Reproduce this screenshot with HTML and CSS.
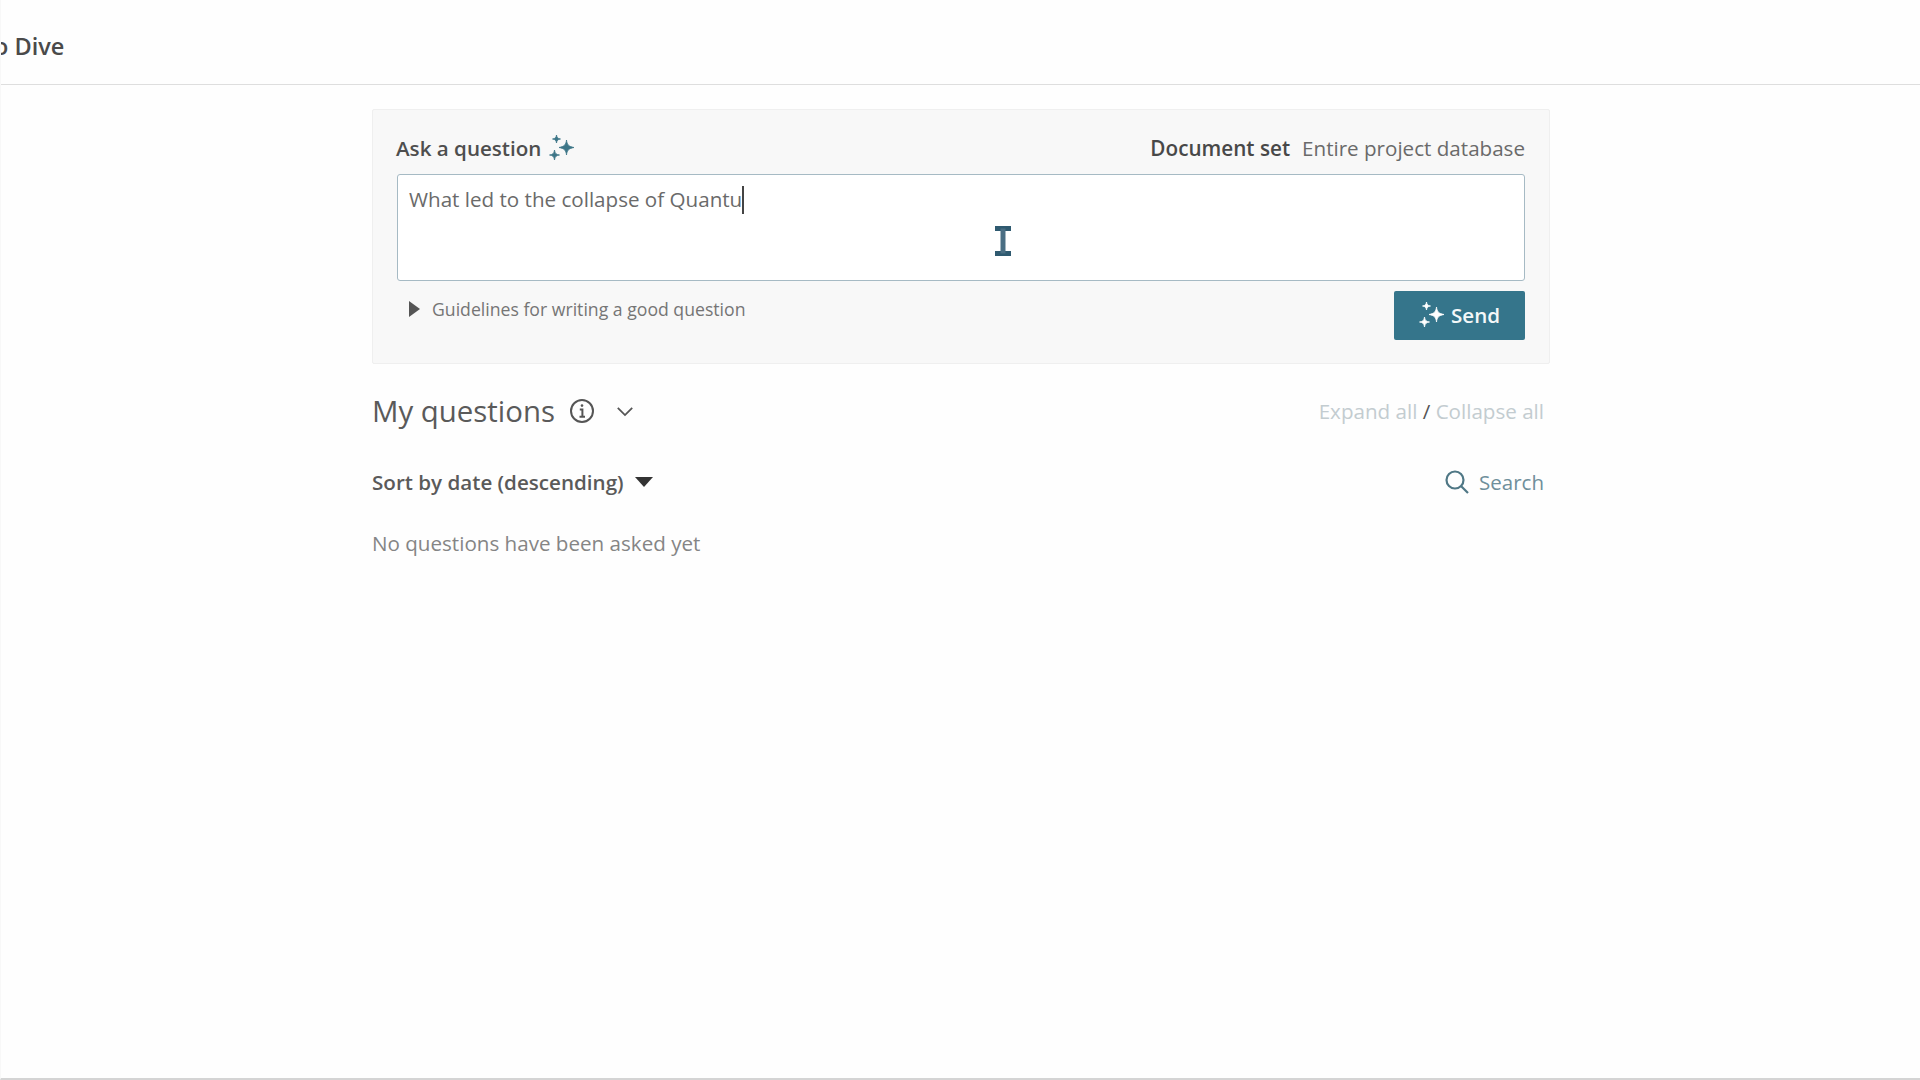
FILE: index.html
```html
<!DOCTYPE html>
<html lang="en">
<head>
<meta charset="utf-8">
<title>Dive</title>
<link rel="stylesheet" href="styles.css">
</head>
<body>
<div class="page">
  <header class="topbar"><span class="title">o Dive</span></header>
  <main class="content">
    <section class="ask">
      <div class="ask-head">
        <div class="ask-label">Ask a question
          <svg class="spark" viewBox="0 0 26 26"><path d="M17.500 5C18 9.800 19.800 11.500 25 12.500C19.800 13.500 18 15.200 17.500 20C17 15.200 15.200 13.500 10 12.500C15.200 11.500 17 9.800 17.500 5Z"/><path d="M7.500 0C8 2.800 8.700 3.500 11.500 4C8.700 4.500 8 5.200 7.500 8C7 5.200 6.300 4.500 3.500 4C6.300 3.500 7 2.800 7.500 0Z"/><path d="M5.500 15C6 18.500 7 19.500 10.500 20C7 20.500 6 21.500 5.500 25C5 21.500 4 20.500 0.500 20C4 19.500 5 18.500 5.500 15Z"/></svg>
        </div>
        <div class="docset"><b>Document set</b><span>Entire project database</span></div>
      </div>
      <div class="input"><span class="typed">What led to the collapse of Quantu</span><i class="caret"></i></div>
      <div class="ask-foot">
        <div class="guide"><i class="tri-right"></i><span>Guidelines for writing a good question</span></div>
        <button class="send">
          <svg class="spark white" viewBox="0 0 26 26"><path d="M17.500 5C18 9.800 19.800 11.500 25 12.500C19.800 13.500 18 15.200 17.500 20C17 15.200 15.200 13.500 10 12.500C15.200 11.500 17 9.800 17.500 5Z"/><path d="M7.500 0C8 2.800 8.700 3.500 11.500 4C8.700 4.500 8 5.200 7.500 8C7 5.200 6.300 4.500 3.500 4C6.300 3.500 7 2.800 7.500 0Z"/><path d="M5.500 15C6 18.500 7 19.500 10.500 20C7 20.500 6 21.500 5.500 25C5 21.500 4 20.500 0.500 20C4 19.500 5 18.500 5.500 15Z"/></svg>
          <span>Send</span>
        </button>
      </div>
    </section>
    <section class="questions">
      <div class="row q-head">
        <div class="q-title">
          <h2>My questions</h2>
          <svg class="info" viewBox="0 0 26 26"><circle cx="13" cy="13" r="11" /><path d="M10.800 11.500H13.400V18.500M10.500 18.800H16"/><circle class="dot" cx="13" cy="7.600" r="1.300"/></svg>
          <svg class="chev" viewBox="0 0 20 12"><path d="M2 2L10 10L18 2"/></svg>
        </div>
        <div class="toggle"><span>Expand all</span> <b>/</b> <span>Collapse all</span></div>
      </div>
      <div class="row sort-row">
        <div class="sort">Sort by date (descending)<i class="tri-down"></i></div>
        <div class="search">
          <svg viewBox="0 0 26 26"><circle cx="11" cy="11" r="8.500"/><path d="M17.200 17.200L24 24"/></svg>
          <span>Search</span>
        </div>
      </div>
      <p class="empty">No questions have been asked yet</p>
    </section>
  </main>
  <svg class="ibeam" viewBox="0 0 20 30"><path class="ibeam-caps" d="M2 2.500H18M2 27.500H18"/><path class="ibeam-stem" d="M10 2.500V27.500"/></svg>
</div>
</body>
</html>
```
FILE: styles.css
```css
* { box-sizing: border-box; }
html, body { margin: 0; height: 100%; }
body {
  font-family: "Open Sans", "Noto Sans", sans-serif;
  background: #fefefe;
  color: #555;
  overflow: hidden;
}
.page {
  position: relative;
  height: 1080px;
  display: flex;
  flex-direction: column;
  border-bottom: 2px solid #d4d4d4;
  border-left: 1px solid #f8f8f8;
}
.topbar {
  height: 85px;
  flex: none;
  display: flex;
  align-items: center;
  border-bottom: 1px solid #dedede;
  overflow: hidden;
  padding-top: 7px;
}
.title {
  margin-left: -7px;
  font-size: 23.500px;
  font-weight: 600;
  color: #4a4a4a;
}
.content {
  width: 1178px;
  margin: 24px 0 0 371px;
}
.ask {
  height: 255px;
  padding: 23px 24px 0 24px;
  background: #f8f8f8;
  border: 1px solid #efefef;
  border-radius: 2px;
}
.ask-head {
  height: 30px;
  margin-left: -1px;
  display: flex;
  justify-content: space-between;
  align-items: center;
  font-size: 20.600px;
}
.ask-label {
  display: flex;
  align-items: center;
  gap: 8px;
  font-weight: 600;
  color: #4e4e4e;
}
.spark { width: 26px; height: 26px; fill: #3d7688; stroke: #3d7688; stroke-width: 0.800; }
.spark.white { fill: #fff; stroke: #fff; }
.docset { display: flex; gap: 12px; color: #6a6a6a; }
.docset b { font-size: 20.700px; font-weight: 600; color: #484848; }
.input {
  height: 107px;
  margin-top: 11px;
  padding: 9px 11px;
  display: flex;
  align-items: flex-start;
  background: #fff;
  border: 1px solid #a6bac4;
  border-radius: 3px;
  font-size: 20.600px;
  line-height: 30px;
  color: #6a6a6a;
}
.caret { width: 2px; height: 28px; margin-top: 2px; background: #444; }
.ask-foot {
  display: flex;
  justify-content: space-between;
  align-items: flex-start;
  margin-top: 10px;
}
.guide {
  display: flex;
  align-items: center;
  gap: 12px;
  height: 32px;
  margin-top: 2px;
  padding-left: 12px;
  font-size: 17.650px;
  color: #757575;
}
.tri-right {
  width: 0;
  height: 0;
  border-left: 11px solid #555;
  border-top: 8px solid transparent;
  border-bottom: 8px solid transparent;
}
.send {
  width: 131px;
  height: 49px;
  display: flex;
  align-items: center;
  justify-content: center;
  gap: 6px;
  padding: 0 0 2px;
  border: 0;
  border-radius: 2px;
  background: #35758b;
  color: #f4f8f9;
  font: 600 20.600px "Open Sans", sans-serif;
}
.questions { padding-right: 6px; }
.row { display: flex; justify-content: space-between; align-items: center; }
.q-head { height: 40px; margin-top: 27px; }
.q-title { display: flex; align-items: center; }
h2 { margin: 0; font-size: 29.400px; font-weight: 400; color: #5a5a5a; }
.info { width: 26px; height: 26px; margin-left: 14px; fill: none; stroke: #555; stroke-width: 2; }
.info .dot { fill: #555; stroke: none; }
.chev { width: 18px; height: 11px; margin-left: 21px; fill: none; stroke: #555; stroke-width: 2; }
.toggle { font-size: 20.600px; color: #c3ccd0; }
.toggle b { font-weight: 400; color: #555; }
.sort-row { height: 30px; margin-top: 36px; }
.sort { display: flex; align-items: center; gap: 11px; font-size: 20.600px; font-weight: 600; color: #5a5a5a; }
.tri-down {
  width: 0;
  height: 0;
  border-top: 10px solid #333;
  border-left: 9px solid transparent;
  border-right: 9px solid transparent;
}
.search { display: flex; align-items: center; gap: 9px; font-size: 20.500px; color: #6f8f9b; }
.search svg { width: 26px; height: 26px; fill: none; stroke: #4f7785; stroke-width: 2.200; }
.empty { margin: 31px 0 0; font-size: 20.600px; line-height: 30px; color: #858585; }
.ibeam {
  position: absolute;
  left: 992px;
  top: 226px;
  width: 20px;
  height: 30px;
  fill: none;
  stroke: #2f5a70;
}
.ibeam-caps { stroke-width: 5; }
.ibeam-stem { stroke-width: 5; stroke: #4a6e83; }
```
